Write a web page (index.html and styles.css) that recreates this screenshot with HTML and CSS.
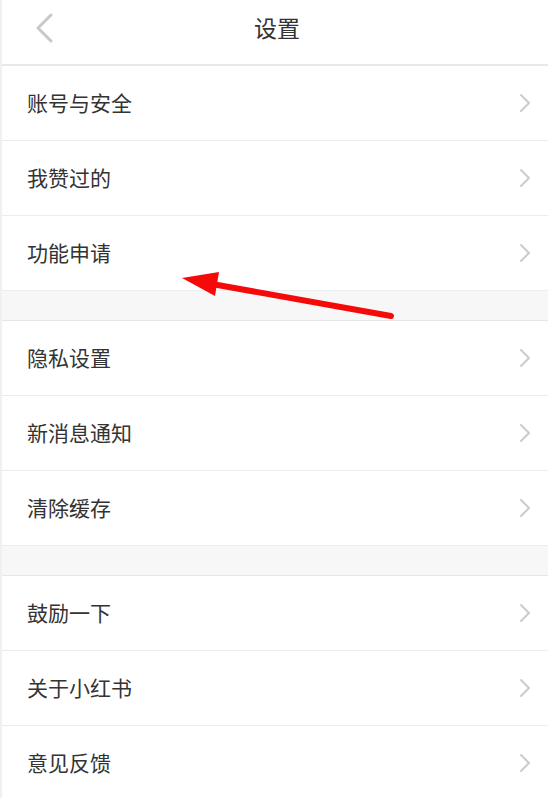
FILE: index.html
```html
<!DOCTYPE html>
<html lang="zh-CN">
<head>
<meta charset="utf-8">
<title>设置</title>
<link rel="stylesheet" href="styles.css">
</head>
<body>
<div class="page">
  <header class="topbar">
    <svg class="back" width="24" height="34" viewBox="0 0 24 34"><polyline points="16,3 3,16 16,29" fill="none" stroke="#c8c8c8" stroke-width="3" stroke-linecap="round" stroke-linejoin="round"/></svg>
    <h1 class="title">设置</h1>
  </header>
  <section class="group">
    <div class="row"><span>账号与安全</span><svg class="chev" width="12" height="20" viewBox="0 0 12 20"><polyline points="2,2 10,10 2,18" fill="none" stroke="#cccccc" stroke-width="2" stroke-linecap="round" stroke-linejoin="round"/></svg></div>
    <div class="row"><span>我赞过的</span><svg class="chev" width="12" height="20" viewBox="0 0 12 20"><polyline points="2,2 10,10 2,18" fill="none" stroke="#cccccc" stroke-width="2" stroke-linecap="round" stroke-linejoin="round"/></svg></div>
    <div class="row"><span>功能申请</span><svg class="chev" width="12" height="20" viewBox="0 0 12 20"><polyline points="2,2 10,10 2,18" fill="none" stroke="#cccccc" stroke-width="2" stroke-linecap="round" stroke-linejoin="round"/></svg></div>
  </section>
  <div class="gap"></div>
  <section class="group">
    <div class="row"><span>隐私设置</span><svg class="chev" width="12" height="20" viewBox="0 0 12 20"><polyline points="2,2 10,10 2,18" fill="none" stroke="#cccccc" stroke-width="2" stroke-linecap="round" stroke-linejoin="round"/></svg></div>
    <div class="row"><span>新消息通知</span><svg class="chev" width="12" height="20" viewBox="0 0 12 20"><polyline points="2,2 10,10 2,18" fill="none" stroke="#cccccc" stroke-width="2" stroke-linecap="round" stroke-linejoin="round"/></svg></div>
    <div class="row"><span>清除缓存</span><svg class="chev" width="12" height="20" viewBox="0 0 12 20"><polyline points="2,2 10,10 2,18" fill="none" stroke="#cccccc" stroke-width="2" stroke-linecap="round" stroke-linejoin="round"/></svg></div>
  </section>
  <div class="gap"></div>
  <section class="group">
    <div class="row"><span>鼓励一下</span><svg class="chev" width="12" height="20" viewBox="0 0 12 20"><polyline points="2,2 10,10 2,18" fill="none" stroke="#cccccc" stroke-width="2" stroke-linecap="round" stroke-linejoin="round"/></svg></div>
    <div class="row"><span>关于小红书</span><svg class="chev" width="12" height="20" viewBox="0 0 12 20"><polyline points="2,2 10,10 2,18" fill="none" stroke="#cccccc" stroke-width="2" stroke-linecap="round" stroke-linejoin="round"/></svg></div>
    <div class="row"><span>意见反馈</span><svg class="chev" width="12" height="20" viewBox="0 0 12 20"><polyline points="2,2 10,10 2,18" fill="none" stroke="#cccccc" stroke-width="2" stroke-linecap="round" stroke-linejoin="round"/></svg></div>
  </section>
  <svg class="arrow" width="548" height="798" viewBox="0 0 548 798">
    <line x1="391" y1="316" x2="212" y2="284" stroke="#f50a0a" stroke-width="6" stroke-linecap="round"/>
    <polygon points="182,278 219,272 215,296" fill="#f50a0a"/>
  </svg>
</div>
</body>
</html>
```
FILE: styles.css
```css
html, body {
  margin: 0;
  padding: 0;
  background: #ffffff;
}
body {
  font-family: "Noto Sans CJK SC", "Noto Sans", sans-serif;
  color: #333333;
}
.page {
  position: relative;
  width: 548px;
  height: 798px;
  overflow: hidden;
  border-left: 2px solid #f0f0f0;
  box-sizing: border-box;
}
.topbar {
  position: relative;
  height: 64px;
  border-bottom: 2px solid #e8e8e8;
  display: flex;
  align-items: flex-start;
  justify-content: center;
  padding: 0 0 0 4px;
}
.back {
  position: absolute;
  left: 33px;
  top: 12px;
}
.title {
  margin: 11px 0 0;
  font-size: 23px;
  line-height: 32px;
  font-weight: normal;
  color: #333333;
}
.group {
  background: #ffffff;
}
.row {
  height: 72px;
  border-bottom: 1px solid #ececec;
  display: flex;
  align-items: center;
  justify-content: space-between;
  padding: 0 17px 2px 25px;
  font-size: 21px;
  color: #333333;
}
.chev {
  display: block;
  margin-top: 2px;
}
.gap {
  height: 29px;
  background: #f7f7f7;
  border-bottom: 1px solid #e6e6e6;
}
.arrow {
  position: absolute;
  left: -2px;
  top: 0;
  pointer-events: none;
}
```
